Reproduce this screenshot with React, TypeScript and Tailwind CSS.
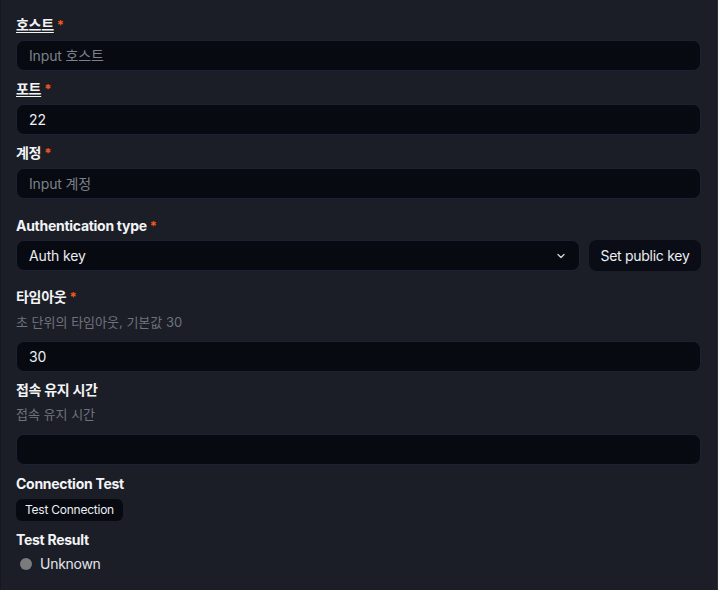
import React from "react";

const font = { fontFamily: "Inter, 'Noto Sans CJK KR', sans-serif" };

function Req() {
  return <span className="ml-[3px] text-[13px] font-bold text-[#f5561c]">*</span>;
}

function Label({ children, underline, required = true }: { children: React.ReactNode; underline?: boolean; required?: boolean }) {
  return (
    <div className="h-5 flex items-center text-sm font-bold text-[#f3f4f6] leading-5 tracking-[-0.02em]">
      <span className={underline ? "underline underline-offset-2 decoration-1" : ""}>{children}</span>
      {required && <Req />}
    </div>
  );
}

function Input({ value, placeholder }: { value?: string; placeholder?: string }) {
  return (
    <div className="h-[31px] w-full rounded-lg border border-[#1d2133] bg-[#070a11] px-3 flex items-center text-sm tracking-[-0.01em]">
      {value ? (
        <span className="text-[#eceef2]">{value}</span>
      ) : (
        <span className="text-[#7d808a]">{placeholder}</span>
      )}
    </div>
  );
}

export default function App() {
  return (
    <div style={font} className="w-[718px] h-[590px] bg-[#1b1e27] border-r border-[#2b2e39] border-l border-l-[#16181f] pl-[15px] pr-4 pt-[15px] overflow-hidden">
      <Label underline>호스트</Label>
      <div className="mt-[5px]">
        <Input placeholder="Input 호스트" />
      </div>

      <div className="mt-[8px]">
        <Label underline>포트</Label>
      </div>
      <div className="mt-[5px]">
        <Input value="22" />
      </div>

      <div className="mt-[8px]">
        <Label>계정</Label>
      </div>
      <div className="mt-[5px]">
        <Input placeholder="Input 계정" />
      </div>

      <div className="mt-[17px]">
        <Label>Authentication type</Label>
      </div>
      <div className="mt-[4px] flex gap-[9px]">
        <div className="h-[31px] flex-1 rounded-lg border border-[#1d2133] bg-[#070a11] pl-3 pr-3 flex items-center justify-between text-sm text-[#eceef2] tracking-[-0.01em]">
          <span>Auth key</span>
          <svg width="12" height="12" viewBox="0 0 24 24" fill="none" stroke="#d6d8de" strokeWidth="2.5" strokeLinecap="round" strokeLinejoin="round">
            <path d="m6 9 6 6 6-6" />
          </svg>
        </div>
        <button className="h-[31px] w-[112px] rounded-lg bg-[#0a0d16] text-sm text-[#eceef2] flex items-center justify-center tracking-[-0.02em]">
          Set public key
        </button>
      </div>

      <div className="mt-[16px]">
        <Label>타임아웃</Label>
      </div>
      <div className="mt-[5px] h-5 leading-5 text-[13px] text-[#6f727c]">초 단위의 타임아웃, 기본값 30</div>
      <div className="mt-[9px]">
        <Input value="30" />
      </div>

      <div className="mt-[8px]">
        <Label required={false}>접속 유지 시간</Label>
      </div>
      <div className="mt-[4px] h-5 leading-5 text-[13px] text-[#6f727c]">접속 유지 시간</div>
      <div className="mt-[10px]">
        <Input />
      </div>

      <div className="mt-[9px]">
        <Label required={false}>Connection Test</Label>
      </div>
      <div className="mt-[5px]">
        <button className="h-[22px] px-[9px] rounded-md bg-[#070a11] text-xs text-[#eceef2] flex items-center tracking-[-0.02em]">
          Test Connection
        </button>
      </div>

      <div className="mt-[9px]">
        <Label required={false}>Test Result</Label>
      </div>
      <div className="mt-[4px] h-5 flex items-center gap-2 pl-1 text-sm text-[#e3e5ea] tracking-[-0.02em]">
        <span className="w-3 h-3 rounded-full bg-[#7b7b7e]" />
        <span>Unknown</span>
      </div>
    </div>
  );
}
